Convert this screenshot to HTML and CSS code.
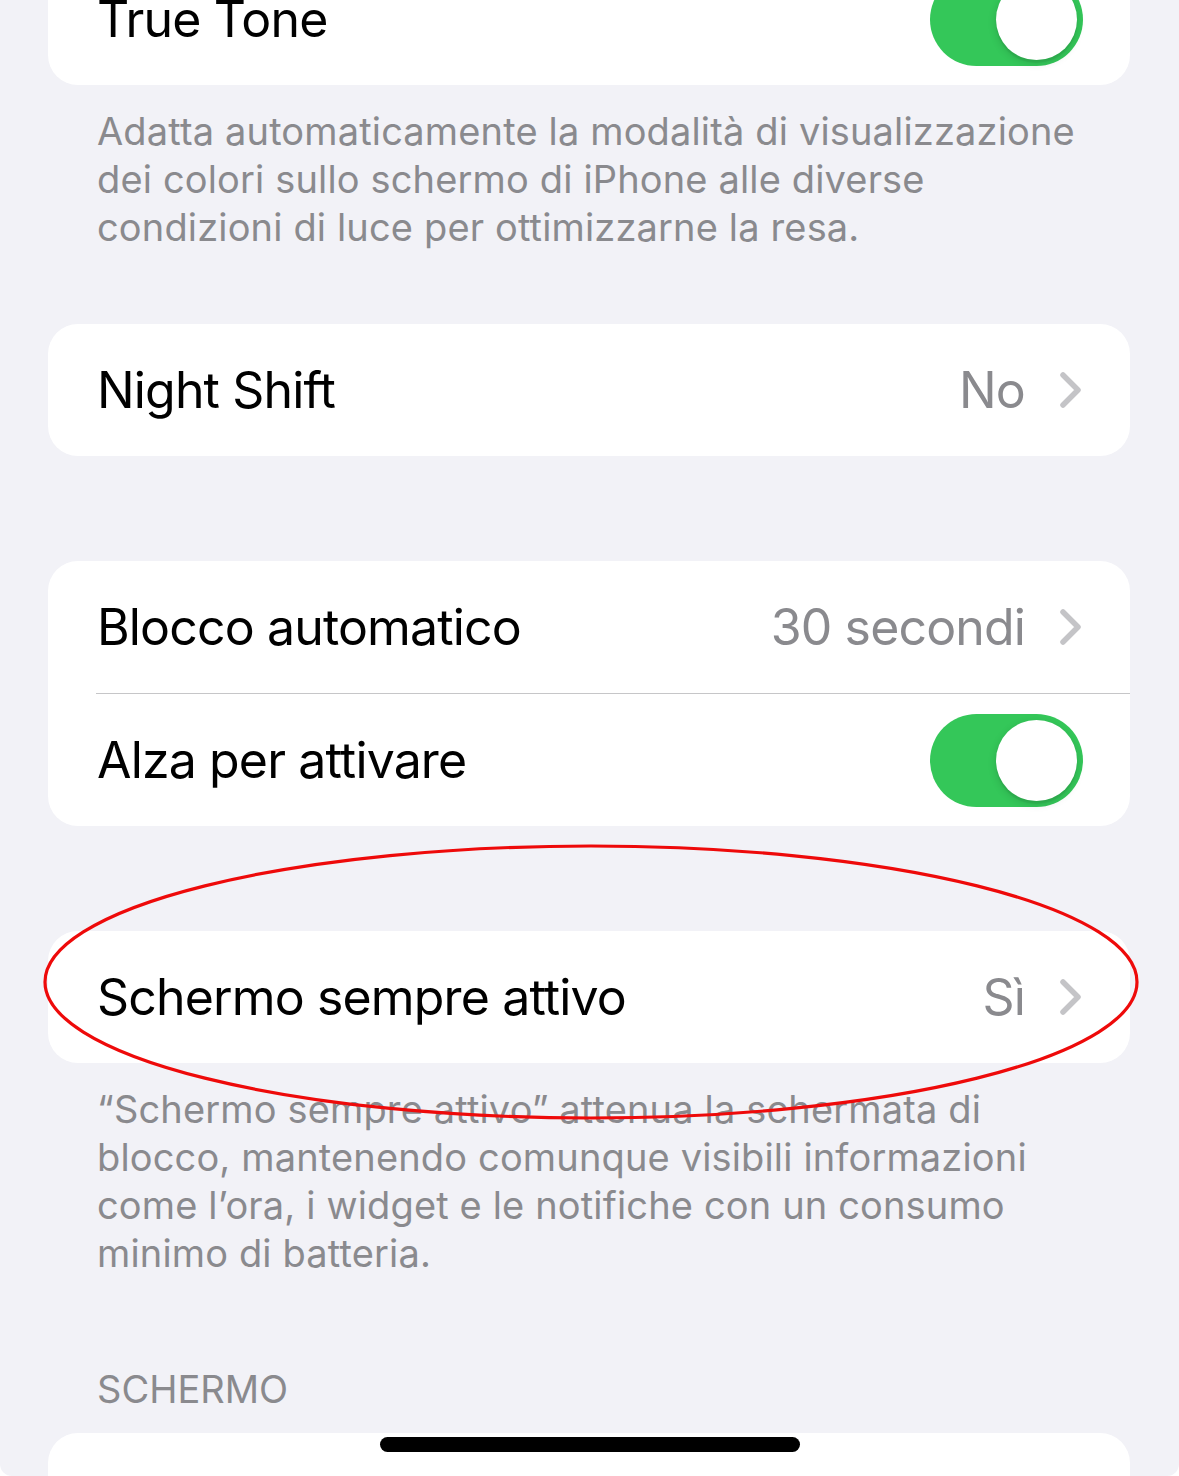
FILE: index.html
```html
<!DOCTYPE html>
<html lang="it">
<head>
<meta charset="utf-8">
<title>Schermo e luminosità</title>
<link rel="stylesheet" href="styles.css">
</head>
<body>
<div class="screen">
  <section class="group group-top">
    <div class="card">
      <div class="row">
        <span class="label">True Tone</span>
        <span class="switch is-on"><span class="knob"></span></span>
      </div>
    </div>
    <p class="footer">Adatta automaticamente la modalità di visualizzazione dei colori sullo schermo di iPhone alle diverse condizioni di luce per ottimizzarne la resa.</p>
  </section>

  <section class="group group-night">
    <div class="card">
      <div class="row">
        <span class="label">Night Shift</span>
        <span class="detail">No</span>
        <svg class="chevron" viewBox="0 0 22 36" aria-hidden="true"><path d="M3 3 L18 18 L3 33"/></svg>
      </div>
    </div>
  </section>

  <section class="group group-lock">
    <div class="card">
      <div class="row">
        <span class="label">Blocco automatico</span>
        <span class="detail">30 secondi</span>
        <svg class="chevron" viewBox="0 0 22 36" aria-hidden="true"><path d="M3 3 L18 18 L3 33"/></svg>
      </div>
      <div class="separator"></div>
      <div class="row">
        <span class="label">Alza per attivare</span>
        <span class="switch is-on"><span class="knob"></span></span>
      </div>
    </div>
  </section>

  <section class="group group-aod">
    <div class="card">
      <div class="row">
        <span class="label">Schermo sempre attivo</span>
        <span class="detail">Sì</span>
        <svg class="chevron" viewBox="0 0 22 36" aria-hidden="true"><path d="M3 3 L18 18 L3 33"/></svg>
      </div>
    </div>
    <p class="footer">“Schermo sempre attivo” attenua la schermata di blocco, mantenendo comunque visibili informazioni come l’ora, i widget e le notifiche con un consumo minimo di batteria.</p>
  </section>

  <section class="group group-display">
    <h2 class="header">SCHERMO</h2>
    <div class="card card-tall"></div>
  </section>
</div>

<svg class="circle-mark" viewBox="0 0 1179 1476" aria-hidden="true">
  <ellipse cx="591" cy="982" rx="546" ry="136"/>
</svg>

<div class="home-indicator"></div>
</body>
</html>
```

FILE: styles.css
```css
html, body {
  margin: 0;
  padding: 0;
  background: #ffffff;
}

body {
  width: 1179px;
  height: 1476px;
  overflow: hidden;
  position: relative;
  font-family: Inter, "Noto Sans", "Liberation Sans", sans-serif;
  -webkit-font-smoothing: antialiased;
}

.screen {
  height: 1476px;
  overflow: hidden;
  background: #f2f2f7;
  border-radius: 0 0 12px 12px;
  padding: 0 49px 0 48px;
  box-sizing: border-box;
  display: flex;
  flex-direction: column;
}

.group {
  display: flex;
  flex-direction: column;
}

.group-top { margin-top: -47px; }
.group-night { margin-top: 73px; }
.group-lock { margin-top: 105px; }
.group-aod { margin-top: 105px; }
.group-display { margin-top: 88px; }

.card {
  background: #ffffff;
  border-radius: 30px;
  display: flex;
  flex-direction: column;
}

.card-tall {
  height: 240px;
}

.row {
  height: 132px;
  display: flex;
  align-items: center;
  padding: 0 48px 0 49px;
}

.separator {
  height: 1px;
  margin-left: 48px;
  background: #c6c6c8;
}

.label {
  flex: 1;
  font-size: 50px;
  color: #000000;
  letter-spacing: -0.85px;
  white-space: nowrap;
}

.detail {
  font-size: 50px;
  color: #8a8a8e;
  letter-spacing: -0.85px;
  margin-right: 35px;
}

.chevron {
  width: 22px;
  height: 36px;
  flex: none;
}

.chevron path {
  fill: none;
  stroke: #c4c4c7;
  stroke-width: 5.5;
  stroke-linecap: round;
  stroke-linejoin: round;
}

.switch {
  flex: none;
  width: 153px;
  height: 93px;
  border-radius: 47px;
  background: #34c759;
  position: relative;
  margin-right: -1px;
}

.knob {
  position: absolute;
  top: 6px;
  right: 6px;
  width: 81px;
  height: 81px;
  border-radius: 50%;
  background: #ffffff;
  box-shadow: 0 3px 8px rgba(0, 0, 0, 0.15), 0 3px 1px rgba(0, 0, 0, 0.06);
}

.footer {
  margin: 22px 0 0;
  padding: 0 40px 0 49px;
  font-size: 38px;
  line-height: 48px;
  color: #8a8a8e;
  letter-spacing: 0.15px;
}

.header {
  margin: 0 0 20px;
  padding-left: 49px;
  font-size: 38px;
  font-weight: 400;
  line-height: 48px;
  color: #8a8a8e;
}

.circle-mark {
  position: absolute;
  left: 0;
  top: 0;
  width: 1179px;
  height: 1476px;
  pointer-events: none;
}

.circle-mark ellipse {
  fill: none;
  stroke: #ee0a0a;
  stroke-width: 3.2;
}

.home-indicator {
  position: absolute;
  left: 380px;
  top: 1437px;
  width: 420px;
  height: 15px;
  border-radius: 8px;
  background: #000000;
}
```
